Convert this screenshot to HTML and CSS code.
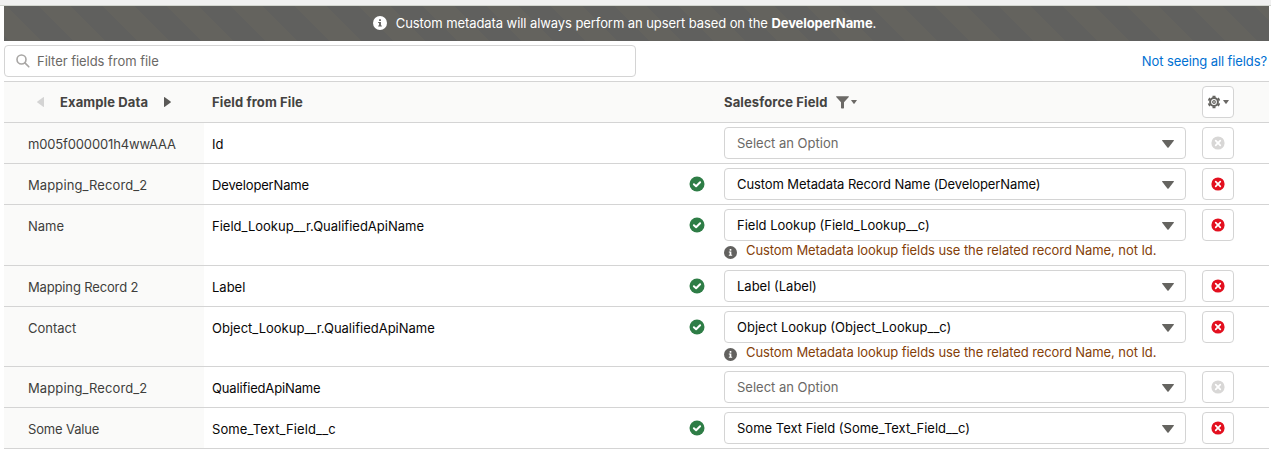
FILE: index.html
```html
<!DOCTYPE html>
<html lang="en">
<head>
<meta charset="utf-8">
<title>Field mapping</title>
<link rel="stylesheet" href="styles.css">
</head>
<body>
<svg class="sprite" aria-hidden="true">
  <symbol id="info" viewBox="0 0 14 14"><circle cx="7" cy="7" r="7" fill="currentColor"/><path class="cut" d="M6.1 3.3h1.8v1.700H6.1zM5.2 5.900h2.700v3.600h.9v1.100H5.200V9.500h.9V7h-.9z"/></symbol>
  <symbol id="check" viewBox="0 0 16 16"><circle cx="8" cy="8" r="7.500" fill="currentColor"/><path d="M4.900 8.200l2.200 2 4-4" fill="none" stroke="#fff" stroke-width="2" stroke-linecap="round" stroke-linejoin="round"/></symbol>
  <symbol id="clear" viewBox="0 0 14 14"><circle cx="7" cy="7" r="6.600" fill="currentColor"/><path d="M4.700 4.700l4.600 4.600M9.300 4.700L4.700 9.300" fill="none" stroke="#fff" stroke-width="1.700" stroke-linecap="round"/></symbol>
  <symbol id="down" viewBox="0 0 12 8"><path d="M.6 0h10.800q.9 0 .4.700L6.600 7.500q-.6.600-1.200 0L.2.700Q-.3 0 .6 0z" fill="currentColor"/></symbol>
</svg>
<div class="strip"></div>
<main class="page">
  <div class="banner"><svg class="banner-icon"><use href="#info"/></svg><p class="banner-text">Custom metadata will always perform an upsert based on the <b>DeveloperName</b>.</p></div>
  <div class="toolbar">
    <label class="search"><svg class="search-icon" viewBox="0 0 14 14"><circle cx="5.500" cy="5.500" r="4.500"/><path d="M8.900 8.900l3.900 3.900"/></svg><span class="search-text">Filter fields from file</span></label>
    <a class="link">Not seeing all fields?</a>
  </div>
  <div class="table">
    <div class="row head">
      <div class="cell example"><svg class="arrow off" viewBox="0 0 7 10"><path d="M7 .7v8.600q0 .9-.8.400L.4 5.500q-.6-.5 0-1L6.200.3Q7-.2 7 .7z"/></svg><span class="title-example">Example Data</span><svg class="arrow" viewBox="0 0 7 10"><path d="M0 .7v8.600q0 .9.800.400l5.800-4.200q.6-.5 0-1L.8.300Q0-.2 0 .7z"/></svg></div>
      <div class="cell file">Field from File</div>
      <div class="cell status"></div>
      <div class="cell field title-field">Salesforce Field<svg class="funnel" viewBox="0 0 13 13"><path d="M.6.300h11.800q.8 0 .4.700L8 6.300v5.500q0 .7-.6.700H5.700q-.7 0-.7-.7V6.300L.2 1Q-.2.300.6.300z"/></svg><svg class="caret" viewBox="0 0 12 8"><use href="#down" width="12" height="8"/></svg></div>
      <div class="cell action"><button class="btn gear-btn"><svg class="gear" viewBox="0 0 14 14"><path class="cog" d="M7 2.600V.8M7 11.400v1.800M3 4.700L1.500 3.900M11 9.300l1.500.8M3 9.300l-1.500.8M11 4.700l1.500-.8"/><circle class="rim" cx="7" cy="7" r="3.900"/><circle class="hub" cx="7" cy="7" r="1.300"/></svg><svg class="caret" viewBox="0 0 12 8"><use href="#down" width="12" height="8"/></svg></button></div>
    </div>
    <div class="row">
      <div class="cell example tight">m005f000001h4wwAAA</div><div class="cell file">Id</div><div class="cell status"></div>
      <div class="cell field"><div class="select empty"><span>Select an Option</span><svg class="down"><use href="#down"/></svg></div></div>
      <div class="cell action"><button class="btn off"><svg class="clear"><use href="#clear"/></svg></button></div>
    </div>
    <div class="row">
      <div class="cell example loose">Mapping_Record_2</div><div class="cell file tight">DeveloperName</div><div class="cell status"><svg class="check"><use href="#check"/></svg></div>
      <div class="cell field"><div class="select snug"><span>Custom Metadata Record Name (DeveloperName)</span><svg class="down"><use href="#down"/></svg></div></div>
      <div class="cell action"><button class="btn"><svg class="clear"><use href="#clear"/></svg></button></div>
    </div>
    <div class="row noted">
      <div class="cell example">Name</div><div class="cell file">Field_Lookup__r.QualifiedApiName</div><div class="cell status"><svg class="check"><use href="#check"/></svg></div>
      <div class="cell field"><div class="select"><span>Field Lookup (Field_Lookup__c)</span><svg class="down"><use href="#down"/></svg></div><div class="note"><svg class="note-icon" viewBox="0 0 14 14"><use href="#info" width="14" height="14"/></svg><span>Custom Metadata lookup fields use the related record Name, not Id.</span></div></div>
      <div class="cell action"><button class="btn"><svg class="clear"><use href="#clear"/></svg></button></div>
    </div>
    <div class="row">
      <div class="cell example tight">Mapping Record 2</div><div class="cell file">Label</div><div class="cell status"><svg class="check"><use href="#check"/></svg></div>
      <div class="cell field"><div class="select"><span>Label (Label)</span><svg class="down"><use href="#down"/></svg></div></div>
      <div class="cell action"><button class="btn"><svg class="clear"><use href="#clear"/></svg></button></div>
    </div>
    <div class="row noted short">
      <div class="cell example">Contact</div><div class="cell file">Object_Lookup__r.QualifiedApiName</div><div class="cell status"><svg class="check"><use href="#check"/></svg></div>
      <div class="cell field"><div class="select"><span>Object Lookup (Object_Lookup__c)</span><svg class="down"><use href="#down"/></svg></div><div class="note"><svg class="note-icon" viewBox="0 0 14 14"><use href="#info" width="14" height="14"/></svg><span>Custom Metadata lookup fields use the related record Name, not Id.</span></div></div>
      <div class="cell action"><button class="btn"><svg class="clear"><use href="#clear"/></svg></button></div>
    </div>
    <div class="row">
      <div class="cell example loose">Mapping_Record_2</div><div class="cell file tight">QualifiedApiName</div><div class="cell status"></div>
      <div class="cell field"><div class="select empty"><span>Select an Option</span><svg class="down"><use href="#down"/></svg></div></div>
      <div class="cell action"><button class="btn off"><svg class="clear"><use href="#clear"/></svg></button></div>
    </div>
    <div class="row">
      <div class="cell example tight">Some Value</div><div class="cell file loose">Some_Text_Field__c</div><div class="cell status"><svg class="check"><use href="#check"/></svg></div>
      <div class="cell field"><div class="select"><span>Some Text Field (Some_Text_Field__c)</span><svg class="down"><use href="#down"/></svg></div></div>
      <div class="cell action"><button class="btn"><svg class="clear"><use href="#clear"/></svg></button></div>
    </div>
  </div>
</main>
</body>
</html>
```
FILE: styles.css
```css
* { box-sizing: border-box; }
body { margin: 0; height: 450px; overflow: hidden; background: #fff; color: #080707; font: 13px/20px Inter, "Liberation Sans", sans-serif; }
svg { display: block; flex: none; }
.sprite { display: none; }
.strip { height: 6px; background: #f0f0f0; border-bottom: 1px solid #d2d5cf; }
.page { width: 1265px; margin-left: 4px; }
.banner { height: 35px; display: flex; align-items: center; justify-content: center; gap: 9px; padding: 0 24px 1px 0; color: #fff; letter-spacing: -.08px; background-color: #64635e; background-image: linear-gradient(45deg, #60605e 25%, transparent 25%, transparent 50%, #60605e 50%, #60605e 75%, transparent 75%); background-size: 64px 64px; background-position: 2px 0; }
.banner-icon { width: 14px; height: 14px; color: #fff; fill: #62615f; }
.banner-text { margin: 0; }
.toolbar { height: 40px; padding-top: 4px; display: flex; justify-content: space-between; align-items: flex-start; }
.search { width: 632px; height: 32px; border: 1px solid #d4d4d4; border-radius: 4px; display: flex; align-items: center; padding-left: 11px; gap: 7px; color: #6b6966; letter-spacing: -.04px; }
.search-icon { width: 14px; height: 14px; fill: none; stroke: #a8a6a4; stroke-width: 1.6; stroke-linecap: round; }
.link { color: #0070d2; padding: 6px 2px 0 0; letter-spacing: -.1px; }
.table { border-top: 1px solid #d4d4d4; }
.row { display: grid; grid-template-columns: 200px 460px 52px 478px 1fr; height: 41px; border-bottom: 1px solid #d4d4d4; }
.row.noted { height: 61px; }
.row.short { height: 60px; }
.cell { padding-top: 11px; white-space: nowrap; }
.example { padding-left: 24px; background: #fafaf9; color: #3e3e3c; }
.file { padding-left: 8px; }
.cell.status { padding: 12px 0 0 25px; }
.cell.field { padding: 4px 0 0 8px; }
.cell.action { padding: 4px 0 0 8px; }
.tight { letter-spacing: -.15px; }
.snug { letter-spacing: -.1px; }
.loose { letter-spacing: .11px; }
.head { background: #fafaf9; font-weight: 700; letter-spacing: .12px; }
.head .cell { padding-top: 10px; color: #444341; }
.head .example { padding-left: 33px; display: flex; }
.head .action { padding-top: 4px; }
.head .title-field { display: flex; }
.title-example { margin: 0 16px; }
.arrow { width: 7px; height: 10px; margin-top: 5px; fill: #5a5957; }
.arrow.off { fill: #d4d4d4; }
.funnel { width: 13px; height: 13px; margin: 4px 2px 0 9px; fill: #6b6966; }
.caret { width: 6px; height: 4px; color: #6b6966; }
.title-field .caret { margin-top: 8px; }
.check { width: 16px; height: 16px; color: #2e7d46; }
.select { width: 462px; height: 32px; border: 1px solid #d4d4d4; border-radius: 4px; background: #fff; display: flex; align-items: center; justify-content: space-between; padding: 0 11px 0 12px; }
.select.empty { color: #6b6966; }
.down { width: 12px; height: 8px; color: #656460; margin-top: 1px; }
.note { display: flex; align-items: center; color: #844008; gap: 9px; height: 18px; letter-spacing: -.08px; }
.note-icon { width: 13px; height: 13px; margin-top: 4px; color: #62615f; fill: #fff; }
.btn { width: 32px; height: 32px; border: 1px solid #d4d4d4; border-radius: 4px; background: #fff; color: #e3101f; padding: 0; display: flex; align-items: center; justify-content: center; }
.btn.off { color: #d8d7d6; }
.clear { width: 14px; height: 14px; }
.gear-btn { gap: 2px; color: #656460; }
.gear { width: 14px; height: 14px; fill: none; stroke: #656460; }
.cog { stroke-width: 3; }
.rim { stroke-width: 2; }
.hub { stroke-width: 1.2; }
```
